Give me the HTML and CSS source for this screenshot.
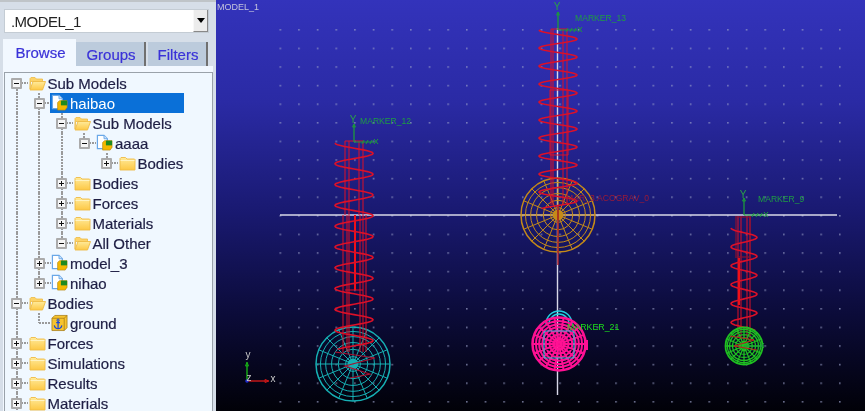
FILE: index.html
```html
<!DOCTYPE html>
<html lang="en">
<head>
<meta charset="utf-8">
<title>MODEL_1</title>
<link rel="stylesheet" href="styles.css">
</head>
<body>
<svg class="defs" width="0" height="0" aria-hidden="true">
  <defs>
    <linearGradient id="fold" x1="0" y1="0" x2="0" y2="1">
      <stop offset="0" stop-color="#ffeb9c"/><stop offset="1" stop-color="#fdc845"/>
    </linearGradient>
    <symbol id="folder" viewBox="0 0 17 16">
      <path d="M1 4V3.5L2 2.5H6.5L8 4H15.5L16 4.5V15H1Z" fill="url(#fold)" stroke="#eebb45" stroke-width=".9"/>
      <path d="M1.5 5.5H15.5" stroke="#fff3c0"/>
    </symbol>
    <symbol id="open" viewBox="0 0 17 16">
      <path d="M1 14V3.5L2 2.5H6L7.5 4H13.5V6.5H1.5Z" fill="#fcd36a" stroke="#eebb45" stroke-width=".8"/>
      <path d="M1 15L4 6.5H16.5L13.5 15Z" fill="url(#fold)" stroke="#eebb45" stroke-width=".9"/>
    </symbol>
    <symbol id="doc" viewBox="0 0 18 18">
      <path d="M1.5 1H8.5L12 4.5V15H1.5Z" fill="#fff" stroke="#6aa8e8" stroke-width="1.3"/>
      <path d="M8.5 1V4.5H12" fill="#cfe4fb" stroke="#6aa8e8"/>
      <path d="M7 8.5L9 6.5H17V13.5L15 16.5H7Z" fill="#f5b800" stroke="#b88a10" stroke-width=".7"/>
      <path d="M10.5 6.5H17V11.5H10.5Z" fill="#1f8a20"/>
    </symbol>
    <symbol id="cube" viewBox="0 0 18 18">
      <path d="M1 4L4 1H17V14L14 17H1Z" fill="#f7c430" stroke="#a67c14" stroke-width=".8"/>
      <path d="M1 4H14V17M14 4L17 1" fill="none" stroke="#a67c14" stroke-width=".8"/>
      <path d="M7.5 6.5V14.5M5.5 8.5H9.5M3.5 11.5C4 14 6 15 7.5 15S11 14 11.5 11.5" fill="none" stroke="#1c48d8" stroke-width="1.3"/>
      <circle cx="7.5" cy="6" r="1.2" fill="none" stroke="#1c48d8"/>
    </symbol>
    <pattern id="dots" x="279.5" y="29" width="18.65" height="18.6" patternUnits="userSpaceOnUse">
      <rect width="1.6" height="1.6" fill="#9aa0c8" fill-opacity=".7"/>
    </pattern>
    <linearGradient id="sky" x1="0" y1="0" x2="0" y2="1">
      <stop offset="0" stop-color="#3333bb"/>
      <stop offset=".25" stop-color="#2a2aa4"/>
      <stop offset=".52" stop-color="#191970"/>
      <stop offset=".75" stop-color="#0c0c3c"/>
      <stop offset="1" stop-color="#010108"/>
    </linearGradient>
  </defs>
</svg>

<main class="app">
  <aside class="side">
    <div class="picker">
      <span class="picker-value">.MODEL_1</span>
      <span class="picker-btn"></span>
    </div>
    <div class="tabs">
      <span class="tab tab-on">Browse</span>
      <span class="tab tab-groups">Groups</span>
      <span class="tab tab-filters">Filters</span>
    </div>
    <div class="page">
      <div class="tree">
        <div class="row"><span class="exp dn"><i class="box minus"></i></span><svg class="ic"><use href="#open"/></svg><span class="lbl">Sub Models</span></div>
        <div class="row"><span class="g"></span><span class="exp"><i class="box minus"></i></span><span class="sel"><svg class="ic ic-doc"><use href="#doc"/></svg><span class="lbl">haibao</span></span></div>
        <div class="row"><span class="g"></span><span class="g"></span><span class="exp"><i class="box minus"></i></span><svg class="ic"><use href="#open"/></svg><span class="lbl">Sub Models</span></div>
        <div class="row"><span class="g"></span><span class="g"></span><span class="g"></span><span class="exp up"><i class="box minus"></i></span><svg class="ic ic-doc"><use href="#doc"/></svg><span class="lbl">aaaa</span></div>
        <div class="row"><span class="g"></span><span class="g"></span><span class="g"></span><span class="b"></span><span class="exp up"><i class="box plus"></i></span><svg class="ic"><use href="#folder"/></svg><span class="lbl">Bodies</span></div>
        <div class="row"><span class="g"></span><span class="g"></span><span class="exp"><i class="box plus"></i></span><svg class="ic"><use href="#folder"/></svg><span class="lbl">Bodies</span></div>
        <div class="row"><span class="g"></span><span class="g"></span><span class="exp"><i class="box plus"></i></span><svg class="ic"><use href="#folder"/></svg><span class="lbl">Forces</span></div>
        <div class="row"><span class="g"></span><span class="g"></span><span class="exp"><i class="box plus"></i></span><svg class="ic"><use href="#folder"/></svg><span class="lbl">Materials</span></div>
        <div class="row"><span class="g"></span><span class="g"></span><span class="exp up"><i class="box minus"></i></span><svg class="ic"><use href="#open"/></svg><span class="lbl">All Other</span></div>
        <div class="row"><span class="g"></span><span class="exp"><i class="box plus"></i></span><svg class="ic ic-doc"><use href="#doc"/></svg><span class="lbl">model_3</span></div>
        <div class="row"><span class="g"></span><span class="exp up"><i class="box plus"></i></span><svg class="ic ic-doc"><use href="#doc"/></svg><span class="lbl">nihao</span></div>
        <div class="row"><span class="exp"><i class="box minus"></i></span><svg class="ic"><use href="#open"/></svg><span class="lbl">Bodies</span></div>
        <div class="row"><span class="g"></span><span class="exp elbow"></span><svg class="ic ic-doc"><use href="#cube"/></svg><span class="lbl">ground</span></div>
        <div class="row"><span class="exp"><i class="box plus"></i></span><svg class="ic"><use href="#folder"/></svg><span class="lbl">Forces</span></div>
        <div class="row"><span class="exp"><i class="box plus"></i></span><svg class="ic"><use href="#folder"/></svg><span class="lbl">Simulations</span></div>
        <div class="row"><span class="exp"><i class="box plus"></i></span><svg class="ic"><use href="#folder"/></svg><span class="lbl">Results</span></div>
        <div class="row"><span class="exp"><i class="box plus"></i></span><svg class="ic"><use href="#folder"/></svg><span class="lbl">Materials</span></div>
      </div>
    </div>
  </aside>

  <section class="view">
    <svg class="scene" viewBox="216 0 649 411" width="649" height="411">
      <rect x="216" y="0" width="649" height="411" fill="url(#sky)"/>
      <rect x="279" y="28" width="562" height="376" fill="url(#dots)"/>
      <path class="axis" d="M280 215H837M557.5 28V395"/>
      <text class="t-model" x="217" y="10">MODEL_1</text>
      <g id="art"></g>
      <text class="t-marker" x="575" y="21">MARKER_13</text>
      <text class="t-marker" x="360" y="124">MARKER_12</text>
      <text class="t-marker" x="758" y="202">MARKER_9</text>
      <text class="t-bright" x="567" y="330">MARKER_21</text>
      <text class="t-red" x="566" y="201">MAR_3.ACOGRAV_0</text>
      <text class="t-axis" x="557" y="10" text-anchor="middle">Y</text>
      <text class="t-axis" x="353" y="123" text-anchor="middle">Y</text>
      <text class="t-axis" x="743" y="198" text-anchor="middle">Y</text>
      <text class="t-triad" x="248" y="358" text-anchor="middle">y</text>
      <text class="t-triad" x="273" y="382" text-anchor="middle">x</text>
      <text class="t-triad" x="249" y="381" text-anchor="middle">z</text>
    </svg>
  </section>
</main>
<script src="app.js"></script>
</body>
</html>
```

FILE: styles.css
```css
html, body {
  margin: 0;
  height: 100%;
  overflow: hidden;
  background: #d6dee8;
}

.defs {
  position: absolute;
}

.app {
  display: flex;
  height: 411px;
  font-family: "Liberation Sans", Arial, sans-serif;
}

.side {
  box-sizing: border-box;
  width: 216px;
  flex: none;
  padding: 7px 3px 0 3px;
  background: #d6dee8;
  border-top: 2px solid #bfc4c8;
  filter: blur(.4px);
  overflow: hidden;
}

.picker {
  display: flex;
  align-items: center;
  box-sizing: border-box;
  height: 24px;
  width: 205px;
  margin-left: 1px;
  background: #fff;
  border: 1px solid #c4ccd4;
  font-size: 15px;
  letter-spacing: -.55px;
  color: #222;
}

.picker-value {
  flex: 1;
  padding-left: 6px;
}

.picker-btn {
  box-sizing: border-box;
  width: 15px;
  height: 22px;
  display: flex;
  align-items: center;
  justify-content: center;
  background: #ececec;
  border-left: 1px solid #f8f8f8;
  border-bottom: 1px solid #888;
  border-right: 1px solid #888;
}

.picker-btn::after {
  content: "";
  border-left: 4px solid transparent;
  border-right: 4px solid transparent;
  border-top: 5px solid #000;
}

.tabs {
  display: flex;
  align-items: flex-end;
  height: 27px;
  margin-top: 6px;
  font-size: 15px;
  color: #3a32d8;
  -webkit-text-stroke: .2px #3a32d8;
}

.tab {
  display: flex;
  align-items: center;
  justify-content: center;
  box-sizing: border-box;
  height: 24px;
  background: #bccbdc;
  border-right: 2px solid #707070;
}

.tab-on {
  width: 73px;
  height: 27px;
  padding-left: 2px;
  background: #f2f8ff;
  border-right: 0;
}

.tab-groups {
  width: 70px;
  margin-right: 2px;
  padding-left: 2px;
}

.tab-filters {
  width: 60px;
  padding-left: 2px;
}

.page {
  box-sizing: border-box;
  width: 210px;
  height: 350px;
  padding: 6px 0 0 1px;
  background: #f2f8ff;
}

.tree {
  box-sizing: border-box;
  height: 344px;
  padding: 0 0 0 6px;
  background: #f0f8ff;
  border: 1px solid #9aa2aa;
  border-bottom: 0;
  overflow: hidden;
  font-size: 15px;
  color: #1e1e44;
  -webkit-text-stroke: .2px #1e1e44;
}

.row {
  display: flex;
  align-items: center;
  height: 20px;
  white-space: nowrap;
}

.g,
.exp {
  --dot: repeating-linear-gradient(#9a9a9a 0 2px, transparent 2px 3px);
  --dash: repeating-linear-gradient(90deg, #9a9a9a 0 2px, transparent 2px 3px);
  flex: none;
  height: 20px;
}

.g {
  width: 22.5px;
  background: var(--dot) 4.5px 0 / 2px 100% no-repeat;
}

.b {
  flex: none;
  width: 22.5px;
}

.exp {
  display: flex;
  align-items: center;
  width: 17.5px;
  background:
    var(--dash) 10px 50% / 7px 2px no-repeat,
    var(--dot) 4.5px 0 / 2px 100% no-repeat;
}

.exp.up {
  background:
    var(--dash) 10px 50% / 7px 2px no-repeat,
    var(--dot) 4.5px 0 / 2px 50% no-repeat;
}

.exp.dn {
  background:
    var(--dash) 10px 50% / 7px 2px no-repeat,
    var(--dot) 4.5px 100% / 2px 50% no-repeat;
}

.exp.elbow {
  background:
    var(--dash) 5px 50% / 12px 2px no-repeat,
    var(--dot) 4.5px 0 / 2px 50% no-repeat;
}

.box {
  box-sizing: border-box;
  display: block;
  width: 11px;
  height: 11px;
  border: 2px solid #ababab;
  border-radius: 1px;
  background-color: #f6f6f6;
  background-repeat: no-repeat;
  background-position: center;
}

.minus {
  background-image: linear-gradient(#111, #111);
  background-size: 5px 1px;
}

.plus {
  background-image: linear-gradient(#111, #111), linear-gradient(#111, #111);
  background-size: 5px 1px, 1px 5px;
}

.ic {
  flex: none;
  width: 17px;
  height: 16px;
  margin-right: 2px;
}

.ic-doc {
  height: 18px;
}

.sel {
  display: flex;
  align-items: center;
  align-self: stretch;
  width: 134px;
  margin-left: -1px;
  padding-left: 1px;
  box-sizing: border-box;
  background: #0a70d8;
  color: #fff;
  -webkit-text-stroke: 0;
}

.view {
  flex: 1;
  min-width: 0;
}

.scene {
  display: block;
  filter: blur(.5px);
}

.axis {
  fill: none;
  stroke: #d8d8e8;
  stroke-width: 1.4;
}

.t-model {
  font-size: 9px;
  fill: #c4c4dc;
}

.t-marker {
  font-size: 8.6px;
  fill: #1f9c44;
}

.t-bright {
  font-size: 8.8px;
  fill: #1ce01c;
}

.t-red {
  font-size: 8.6px;
  fill: #9a1a38;
}

.t-axis {
  font-size: 10px;
  fill: #2aa048;
}

.t-triad {
  font-size: 10px;
  fill: #c8c8c8;
}
```

FILE: app.js
```js
var NS = "http://www.w3.org/2000/svg";
var art = document.getElementById("art");

function path(d, color, width, opacity) {
  var p = document.createElementNS(NS, "path");
  p.setAttribute("d", d);
  p.setAttribute("fill", "none");
  p.setAttribute("stroke", color);
  p.setAttribute("stroke-width", width || 1);
  if (opacity) p.setAttribute("stroke-opacity", opacity);
  art.appendChild(p);
}

function circle(cx, cy, r) {
  return "M" + (cx - r) + " " + cy + "a" + r + " " + r + " 0 1 0 " + 2 * r + " 0a" + r + " " + r + " 0 1 0 " + -2 * r + " 0";
}

function sphere(cx, cy, r, color, width, spokes, rings) {
  var d = "";
  rings.forEach(function (k) {
    d += circle(cx, cy, r * k);
  });
  for (var i = 0; i < spokes; i++) {
    var a = (i * 2 * Math.PI) / spokes;
    d += "M" + (cx + 0.14 * r * Math.cos(a)).toFixed(1) + " " + (cy + 0.14 * r * Math.sin(a)).toFixed(1);
    d += "L" + (cx + r * Math.cos(a)).toFixed(1) + " " + (cy + r * Math.sin(a)).toFixed(1);
  }
  path(d, color, width);
  path(circle(cx, cy, r * 0.08), color, r * 0.14);
  path(circle(cx, cy, r), color, width + 0.5);
}

/* helix seen from the side: left tip at `top`, one turn per `pitch` */
function coil(cx, top, bottom, half, pitch, color, width) {
  var d = "";
  var turns = (bottom - top) / pitch;
  var steps = Math.ceil(turns * 24);
  for (var i = 0; i <= steps; i++) {
    var t = (i / 24) * 2 * Math.PI;
    var x = cx - half * Math.cos(t);
    var y = top + (i / 24) * pitch;
    d += (i ? "L" : "M") + x.toFixed(1) + " " + y.toFixed(1);
  }
  path(d, color, width);
}

function lines(xs, top, bottom, color, width) {
  var d = "";
  xs.forEach(function (x) {
    d += "M" + x + " " + top + "V" + bottom;
  });
  path(d, color, width || 1);
}

function marker(x, y, up) {
  var g = "#1c9a3c";
  path("M" + x + " " + y + "V" + (y - up), g, 1.3);
  path("M" + (x - 1.5) + " " + (y - up + 3) + "L" + x + " " + (y - up) + "L" + (x + 1.5) + " " + (y - up + 3) + "Z", g, 1);
  path("M" + x + " " + y + "H" + (x + 20) + "M" + (x + 8) + " " + (y + 2) + "l2 -4M" + (x + 12) + " " + (y + 2) + "l2 -4M" + (x + 16) + " " + (y + 2) + "l2 -4M" + (x + 20) + " " + (y - 3) + "l4 5M" + (x + 24) + " " + (y - 3) + "l-4 5", g, 1);
}

var red = "#dc1028";
var rings = [0.2, 0.4, 0.58, 0.74, 0.88];

/* spheres sit under the springs */
sphere(558, 215, 37, "#c58a18", 1, 16, rings);
sphere(353, 364, 37, "#16b0b4", 1, 16, rings);

/* left spring */
lines([343, 347, 349, 360, 363, 366], 215, 352, red, 1);
lines([345, 349, 359, 363], 141, 215, red, 1);
path("M345 141H363M345 290H363", red, 1);
lines([355], 215, 290, "#f01018", 2);
coil(354, 143, 349, 19, 20.8, red, 1.6);
path("M335 352L375 358L345 366L370 374L350 378", "#a81230", 1.2);

/* middle spring */
path("M558 205V265", "#a01220", 1.4);
lines([551, 553, 563, 567], 29, 205, red, 1);
path("M551 29H567M550 90H568M550 155H568", red, 1);
lines([550, 568], 90, 155, red, 1);
coil(558, 30, 208, 19, 18, red, 1.6);

/* right spring */
lines([738, 741, 747, 750], 216, 338, red, 1);
path("M736 217h14v40h-14z", "#8a1030", 2, 0.6);
lines([739], 258, 305, "#f01018", 2);
coil(744, 228, 330, 13, 18.9, red, 1.6);

/* magenta body with its cyan outline */
path("M546 324a13 13 0 0 1 26 0M549 324a10 10 0 0 1 20 0", "#22cfe0", 1.4);
sphere(559, 344, 26.5, "#ff1093", 2, 18, [0.2, 0.36, 0.5, 0.63, 0.75, 0.87]);
path("M587 341v8h-2v-8z", "#ff1093", 2);
path("M544 332Q544 331 546 331H572Q574 331 574 333V356Q574 358 572 358H546Q544 358 544 356Z", "#22cfe0", 1.2, 0.85);

/* green body */
sphere(744, 346, 18.5, "#1fc021", 1.3, 16, [0.25, 0.45, 0.62, 0.78, 0.9]);
path("M730 336L754 340L734 346L757 350", "#c01a20", 1);
path("M744 346H764M760 343l4 5M764 343l-4 5", "#1c9a3c", 1);

/* markers */
marker(558, 30, 18);
marker(354, 142, 18);
marker(744, 215, 17);

/* global triad */
path("M247 381V363", "#18b018", 1.4);
path("M245.5 366L247 362L248.5 366Z", "#18b018", 1);
path("M247 381H268", "#d01818", 1.4);
path("M265 379.5L269 381L265 382.5Z", "#d01818", 1);
path(circle(247, 381, 1), "#2030d8", 1.5);
```
